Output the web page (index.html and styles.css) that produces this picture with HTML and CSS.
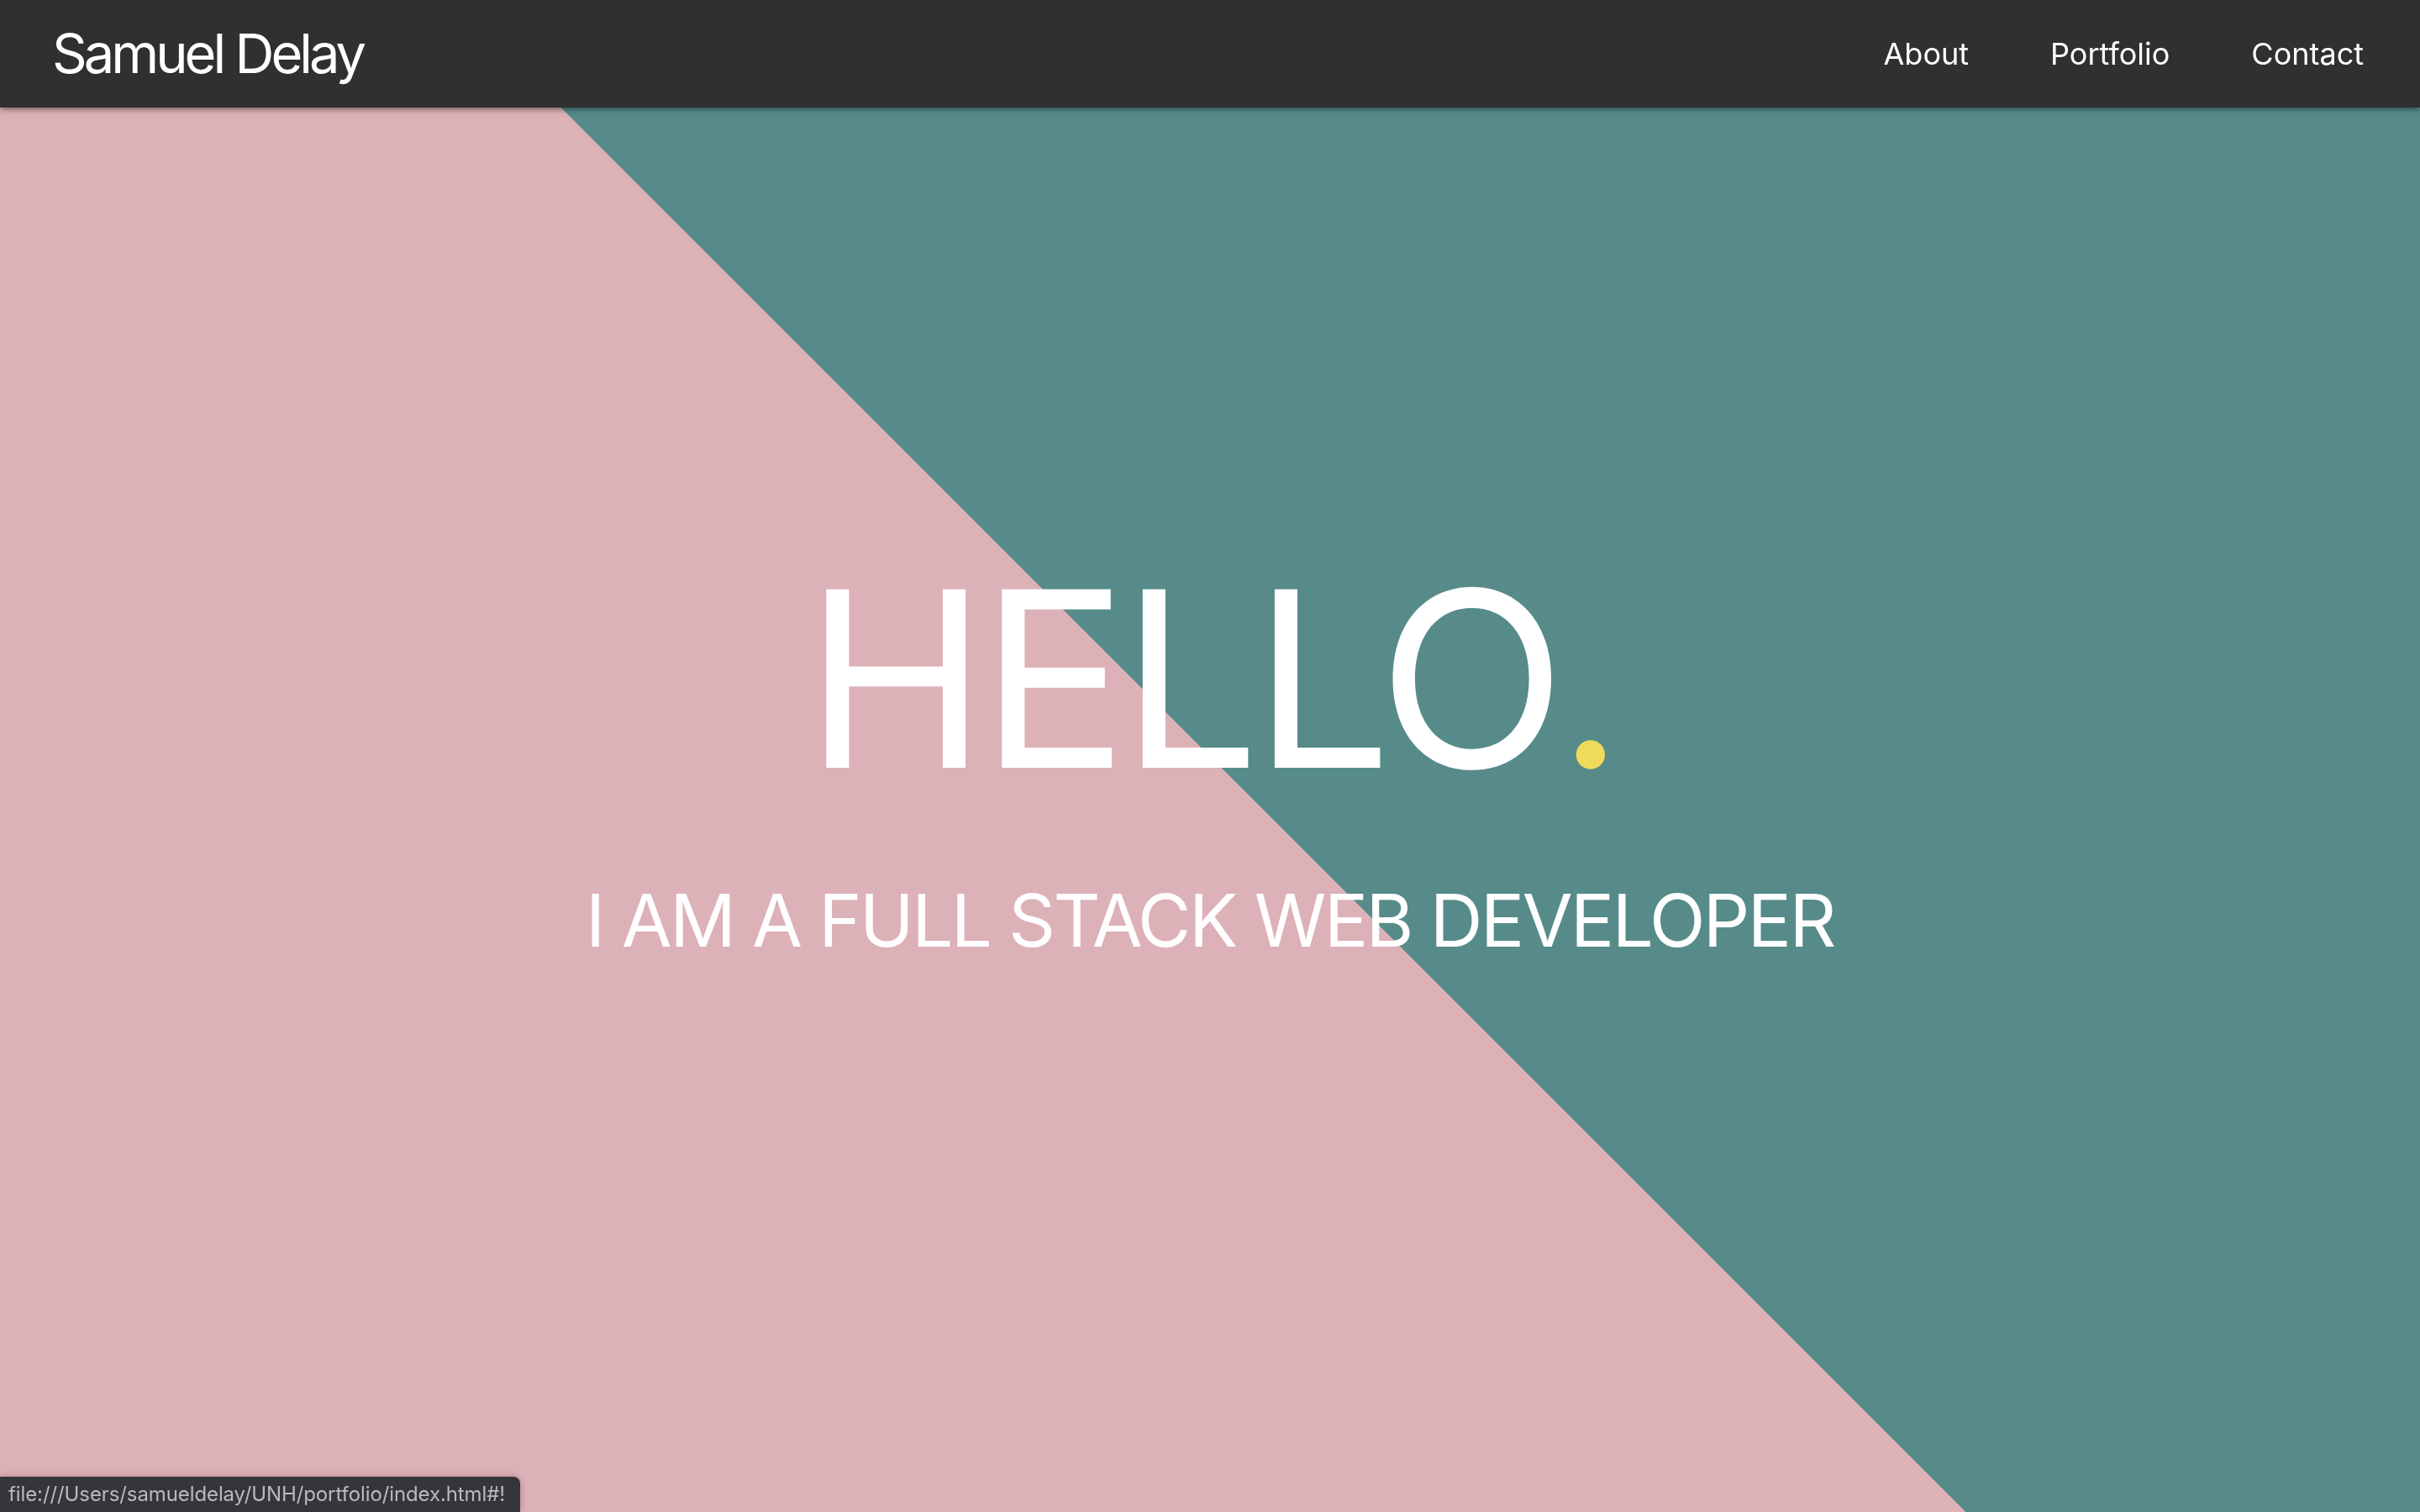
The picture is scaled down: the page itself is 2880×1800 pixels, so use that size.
FILE: index.html
```html
<!DOCTYPE html>
<html lang="en">
<head>
<meta charset="utf-8">
<title>Samuel Delay</title>
<link rel="stylesheet" href="styles.css">
</head>
<body>
<nav class="topnav">
  <a class="brand" href="#!">Samuel Delay</a>
  <ul class="links">
    <li><a href="#!">About</a></li>
    <li><a href="#!">Portfolio</a></li>
    <li><a href="#!">Contact</a></li>
  </ul>
</nav>
<main class="hero">
  <h1 class="hello">HELLO<span class="dot">.</span></h1>
  <p class="tagline">I AM A FULL STACK WEB DEVELOPER</p>
</main>
<div class="status">file:///Users/samueldelay/UNH/portfolio/index.html#!</div>
</body>
</html>
```
FILE: styles.css
```css
html, body {
  margin: 0;
  padding: 0;
}
body {
  font-family: Inter, "Noto Sans", sans-serif;
  color: #fff;
  overflow: hidden;
}
.topnav {
  position: fixed;
  top: 0;
  left: 0;
  right: 0;
  height: 128px;
  background: #303030;
  display: flex;
  align-items: center;
  justify-content: space-between;
  padding: 0 67px 0 62px;
  box-shadow: 0 4px 4px 0 rgba(0,0,0,.14), 0 6px 2px -4px rgba(0,0,0,.12), 0 2px 10px 0 rgba(0,0,0,.2);
  z-index: 2;
}
.brand {
  color: #fff;
  text-decoration: none;
  font-size: 65px;
  line-height: 128px;
  letter-spacing: -4px;
}
.links {
  list-style: none;
  margin: 0;
  padding: 0;
  display: flex;
  gap: 97px;
}
.links a {
  color: #fff;
  text-decoration: none;
  font-size: 36px;
  line-height: 128px;
}
.hero {
  height: 100vh;
  background: linear-gradient(45deg, #ddb1b8 50%, #568b8a 50%);
  display: flex;
  flex-direction: column;
  align-items: center;
  justify-content: center;
  gap: 98px;
}
.hello {
  margin: 0;
  font-size: 292px;
  font-weight: 400;
  line-height: 1;
  letter-spacing: -8px;
}
.dot {
  color: #efdb5b;
  font-size: 260px;
}
.tagline {
  margin: 0;
  font-size: 87px;
  line-height: 1;
  letter-spacing: -2.6px;
}
.status {
  position: fixed;
  left: 0;
  bottom: 0;
  height: 42px;
  line-height: 42px;
  padding: 0 18px 0 10px;
  background: #35363a;
  color: #b9babd;
  font-size: 24px;
  letter-spacing: -0.1px;
  border-top-right-radius: 8px;
  box-shadow: 0 0 8px rgba(0,0,0,.25);
}
```
